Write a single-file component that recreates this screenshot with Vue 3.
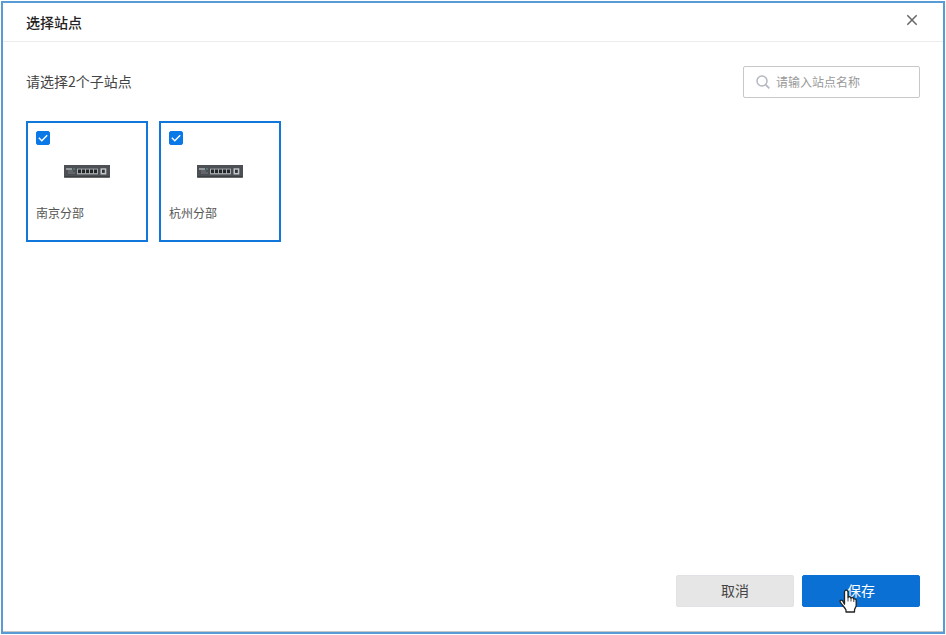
<script setup>
import { computed, ref } from 'vue'

const keyword = ref('')
const sites = ref([
  { id: 'nanjing', name: '南京分部', checked: true },
  { id: 'hangzhou', name: '杭州分部', checked: true },
])
const visibleSites = computed(() => sites.value.filter((s) => s.name.includes(keyword.value.trim())))
const ports = [0, 1, 2, 3, 4]
</script>

<template>
  <div class="page">
    <section class="dialog" role="dialog" aria-labelledby="dialog-title">
      <header class="header">
        <h1 id="dialog-title" class="title">选择站点</h1>
        <button class="close" type="button" aria-label="关闭">
          <svg viewBox="0 0 12 12" width="12" height="12" aria-hidden="true">
            <path d="M1.3 1.3 10.7 10.7M10.7 1.3 1.3 10.7" fill="none" stroke="#666" stroke-width="1.5" />
          </svg>
        </button>
      </header>

      <main class="body">
        <div class="toolbar">
          <p class="prompt">请选择2个子站点</p>
          <label class="search">
            <svg viewBox="0 0 14 14" width="14" height="14" aria-hidden="true">
              <circle cx="6" cy="6" r="5" fill="none" stroke="#b4b8c0" stroke-width="1.5" />
              <path d="M9.6 9.6 13.3 13.3" fill="none" stroke="#b4b8c0" stroke-width="1.7" />
            </svg>
            <input v-model="keyword" type="text" placeholder="请输入站点名称" aria-label="请输入站点名称" />
          </label>
        </div>

        <div class="sites">
          <label v-for="site in visibleSites" :key="site.id" class="card" :class="{ selected: site.checked }">
            <input v-model="site.checked" class="check" type="checkbox" />
            <svg class="device" viewBox="0 0 46 14" width="46" height="14" aria-hidden="true">
              <rect x="0" y="1" width="46" height="12.6" fill="#4c5055" />
              <rect x="0.5" y="12" width="45" height="1.5" fill="#3d4043" />
              <path d="M2 5H8" stroke="#c5c9cc" stroke-width="1.2" />
              <path d="M9 5H11" stroke="#5d9a9c" stroke-width="1" />
              <path d="M4 7H9M4 9H11" stroke="#85898d" stroke-width="0.8" />
              <rect x="13" y="4.6" width="21" height="5.8" fill="#a9acaf" />
              <rect v-for="p in ports" :key="p" :x="14 + p * 4" y="5.5" width="3" height="3.6" fill="#24272a" />
              <rect x="36.5" y="4.3" width="5.8" height="6.2" fill="#c3c6c8" />
              <rect x="38" y="5.7" width="2.8" height="3.2" fill="#303336" />
            </svg>
            <span class="name">{{ site.name }}</span>
          </label>
        </div>
      </main>

      <footer class="footer">
        <button class="button cancel" type="button">取消</button>
        <button class="button save" type="button">
          保存
          <svg class="pointer" viewBox="0 0 18 24" width="18" height="24" aria-hidden="true">
            <path
              d="M5.5 15.2V3.2C5.5 .4 9 .4 9 3.2V8.6C9.5 7.2 11.8 7.5 12 9.2C12.7 8.1 14.6 8.6 14.8 10.2C15.6 9.4 17.2 10 17.2 11.6V16.2C17.2 18.5 15.5 19.5 15.5 21V23H7V21C6 18.8 3.4 16.4 1.5 13.5C.1 11.4 2.2 10.3 3.6 11.8Z"
              fill="#fff" stroke="#222" stroke-width="1.3" stroke-linejoin="round"
            />
            <path d="M9 8.6V12.5M12 9.2V12.5M14.8 10.2V13" fill="none" stroke="#333" stroke-width="0.9" />
          </svg>
        </button>
      </footer>
    </section>
  </div>
</template>

<style>
body {
  margin: 0;
  background: #fff;
}
</style>

<style scoped>
* {
  box-sizing: border-box;
}

.page {
  min-height: 100vh;
  padding: 1px;
  display: flex;
  background: #fff;
  color: #444;
  font-family: "Noto Sans CJK SC", "Noto Sans", sans-serif;
  font-size: 14px;
}

.dialog {
  flex: 1;
  display: flex;
  flex-direction: column;
  border: 2px solid #589bd5;
  box-shadow: inset 0 -1px #c6c6c6;
}

.header {
  height: 39px;
  padding: 0 25px 0 23px;
  display: flex;
  justify-content: space-between;
  align-items: center;
  border-bottom: 1px solid #ececec;
}

.title {
  margin: 0;
  font-size: 14px;
  line-height: 20px;
  font-weight: 500;
  color: #222;
}

.close {
  padding: 0 0 4px;
  border: 0;
  background: none;
  display: flex;
  cursor: pointer;
}

.body {
  flex: 1;
  padding: 24px 23px;
}

.toolbar {
  display: flex;
  justify-content: space-between;
  align-items: center;
}

.prompt {
  margin: 0;
  padding-bottom: 2px;
  line-height: 20px;
}

.search {
  width: 177px;
  height: 32px;
  padding: 0 12px;
  display: flex;
  align-items: center;
  gap: 6px;
  border: 1px solid #c8c8c8;
  border-radius: 2px;
}

.search svg {
  flex: none;
}

.search input {
  flex: 1;
  min-width: 0;
  padding: 0 0 2px;
  border: 0;
  outline: 0;
  background: none;
  font: inherit;
  font-size: 12px;
  color: #444;
}

.search input::placeholder {
  color: #999;
  opacity: 1;
}

.sites {
  margin-top: 23px;
  display: flex;
  flex-wrap: wrap;
  gap: 11px;
}

.card {
  width: 122px;
  height: 121px;
  padding: 8px;
  display: flex;
  flex-direction: column;
  border: 2px solid #1277da;
  cursor: pointer;
}

.card:not(.selected) {
  border-color: #dcdcdc;
}

.check {
  appearance: none;
  width: 14px;
  height: 14px;
  margin: 0;
  border: 1px solid #bbb;
  border-radius: 2px;
}

.check:checked {
  border-color: #0a78e6;
  background: #0a78e6 url("data:image/svg+xml,%3Csvg xmlns='http://www.w3.org/2000/svg' viewBox='0 0 12 12'%3E%3Cpath d='M1.8 5.8 4.8 8.7 10.2 3.2' fill='none' stroke='white' stroke-width='1.4'/%3E%3C/svg%3E") center / 12px no-repeat;
}

.device {
  margin: 19px 0 0 28px;
}

.name {
  margin-top: 26px;
  font-size: 12px;
  line-height: 18px;
  color: #555;
}

.footer {
  padding: 0 23px 25px;
  display: flex;
  justify-content: flex-end;
  gap: 8px;
}

.button {
  position: relative;
  width: 118px;
  height: 32px;
  padding: 0 0 2px;
  border: 1px solid transparent;
  border-radius: 2px;
  font: inherit;
  cursor: pointer;
}

.cancel {
  border-color: #e0e2e5;
  background: #e6e6e6;
  color: #444;
}

.save {
  border-color: #0b70d3;
  background: #0b70d3;
  color: #fff;
}

.pointer {
  position: absolute;
  left: 36px;
  top: 13px;
}
</style>
